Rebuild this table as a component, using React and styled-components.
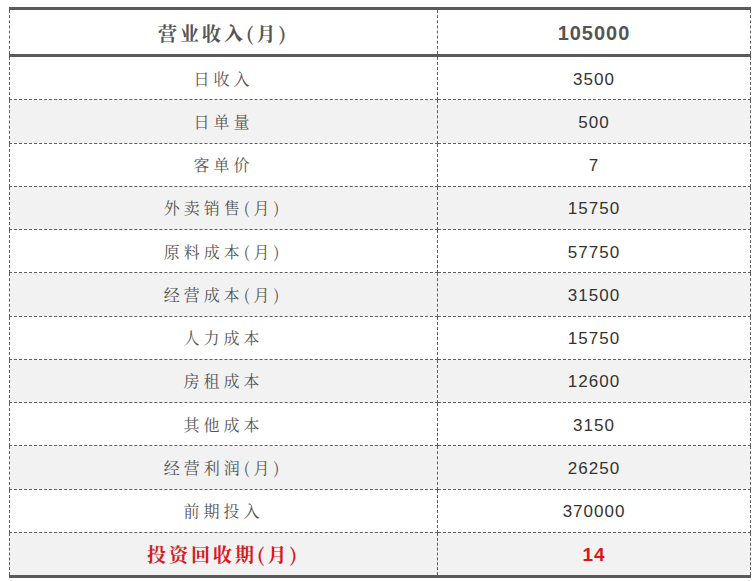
import styled, { createGlobalStyle } from "styled-components";

const GlobalStyle = createGlobalStyle`
  html, body {
    margin: 0;
    padding: 0;
    background: #fff;
  }
`;

const Page = styled.div`
  padding: 7px 5px 0 9px;
`;

const Table = styled.table`
  width: 742px;
  border-collapse: collapse;
  table-layout: fixed;
  border-top: 3px solid #5a5a5a;
  border-bottom: 3px solid #5a5a5a;
`;

const Row = styled.tr`
  background: ${(p) => (p.$shade ? "#f2f2f2" : "#fff")};
`;

const Cell = styled.td`
  height: ${(p) => (p.$head ? "44px" : "42.25px")};
  padding: 0;
  text-align: center;
  vertical-align: middle;
  border: 1px dashed #5f5f5f;
  border-bottom: ${(p) => (p.$head ? "3px solid #5a5a5a" : "1px dashed #5f5f5f")};
`;

const Label = styled.span`
  font-family: "Noto Serif CJK SC", "Noto Sans CJK SC", serif;
  font-size: ${(p) => (p.$head ? "19px" : "16px")};
  font-weight: ${(p) => (p.$head || p.$red ? 700 : 400)};
  letter-spacing: ${(p) => (p.$head ? "3px" : "4px")};
  color: ${(p) => (p.$red ? "#d7191c" : "#555")};
`;

const Value = styled.span`
  display: inline-block;
  padding-top: 3px;
  font-family: "Liberation Sans", Arial, sans-serif;
  font-size: ${(p) => (p.$head ? "20px" : p.$red ? "19px" : "17px")};
  font-weight: ${(p) => (p.$head || p.$red ? 700 : 400)};
  letter-spacing: 1px;
  color: ${(p) => (p.$red ? "#d7191c" : p.$head ? "#555" : "#333")};
`;

const rows = [
  ["日收入", "3500"],
  ["日单量", "500"],
  ["客单价", "7"],
  ["外卖销售(月)", "15750"],
  ["原料成本(月)", "57750"],
  ["经营成本(月)", "31500"],
  ["人力成本", "15750"],
  ["房租成本", "12600"],
  ["其他成本", "3150"],
  ["经营利润(月)", "26250"],
  ["前期投入", "370000"],
];

export default function App() {
  return (
    <Page>
      <GlobalStyle />
      <Table>
        <colgroup>
          <col style={{ width: "428px" }} />
          <col />
        </colgroup>
        <tbody>
          <Row>
            <Cell $head>
              <Label $head>营业收入(月)</Label>
            </Cell>
            <Cell $head>
              <Value $head>105000</Value>
            </Cell>
          </Row>
          {rows.map(([label, value], i) => (
            <Row key={label} $shade={i % 2 === 1}>
              <Cell>
                <Label>{label}</Label>
              </Cell>
              <Cell>
                <Value>{value}</Value>
              </Cell>
            </Row>
          ))}
          <Row $shade>
            <Cell>
              <Label $red $head>投资回收期(月)</Label>
            </Cell>
            <Cell>
              <Value $red>14</Value>
            </Cell>
          </Row>
        </tbody>
      </Table>
    </Page>
  );
}
